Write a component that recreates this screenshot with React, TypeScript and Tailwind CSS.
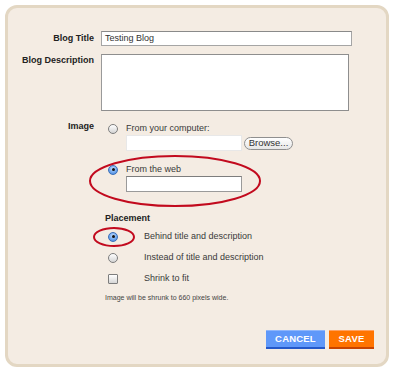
import React from "react";

const font = { fontFamily: '"Liberation Sans", Arial, sans-serif' };

function Radio({ checked }: { checked?: boolean }) {
  return checked ? (
    <div className="w-[10px] h-[10px] rounded-full border border-[#3a6fb8] bg-[radial-gradient(circle_at_50%_35%,#cfe4ff_0%,#7fb2f2_45%,#3b7fdc_100%)] flex items-center justify-center shrink-0">
      <div className="w-[3px] h-[3px] rounded-full bg-[#111]" />
    </div>
  ) : (
    <div className="w-[10px] h-[10px] rounded-full border border-[#7d7d7d] bg-[linear-gradient(#ffffff,#d4d4d4)] shrink-0" />
  );
}

export default function App() {
  return (
    <div className="relative w-[400px] h-[383px] bg-white overflow-hidden" style={font}>
      <div className="ml-[5px] mt-[5px] w-[384px] h-[362px] border-[3px] border-[#e3d7c3] rounded-[12px] bg-[#f4ece3] flex flex-col text-[#333]">
        {/* Blog Title */}
        <div className="flex items-center mt-[23px]">
          <div className="w-[86px] text-right text-[9px] leading-[11px] font-bold text-[#222]">Blog Title</div>
          <div className="ml-[7px] w-[251px] h-[15px] bg-white border border-[#a5a5a5] border-t-[#8a8a8a] flex items-center pl-[3px] text-[9px] text-[#333]">
            Testing Blog
          </div>
        </div>
        {/* Blog Description */}
        <div className="flex items-start mt-[8px]">
          <div className="w-[86px] text-right text-[9px] leading-[11px] font-bold text-[#222] pt-[1px]">Blog Description</div>
          <div className="ml-[7px] w-[248px] h-[57px] bg-white border border-[#8e8e8e] border-l-[#9a9a9a]" />
        </div>
        {/* Image */}
        <div className="flex items-start mt-[10px]">
          <div className="w-[86px] text-right text-[9px] leading-[11px] font-bold text-[#222]">Image</div>
          <div className="ml-[7px] flex flex-col">
            <div className="flex items-center h-[11px] mt-[2px] pl-[7px]">
              <Radio />
              <span className="ml-[8px] text-[9px] leading-[11px] text-[#3a3a3a]">From your computer:</span>
            </div>
            <div className="flex items-center mt-[1px] ml-[25px]">
              <div className="w-[116px] h-[16px] bg-white border border-[#e8e8e8]" />
              <div className="ml-[2px] w-[49px] h-[13px] rounded-full border border-[#8f8f8f] bg-[linear-gradient(#ffffff,#e6e6e6)] flex items-center justify-center text-[9.5px] text-[#333]">
                Browse...
              </div>
            </div>
            <div className="flex items-center h-[11px] mt-[13px] pl-[7px]">
              <Radio checked />
              <span className="ml-[8px] text-[9px] leading-[11px] text-[#3a3a3a]">From the web</span>
            </div>
            <div className="mt-[1px] ml-[25px] w-[116px] h-[16px] bg-white border border-[#9a9a9a] border-t-[#7d7d7d]" />
          </div>
        </div>
        {/* Placement */}
        <div className="mt-[21px] pl-[97px] text-[9px] leading-[11px] font-bold text-[#222]">Placement</div>
        <div className="flex flex-col gap-[10px] mt-[7px] pl-[100px]">
          <div className="flex items-center h-[11px]">
            <Radio checked />
            <span className="ml-[26px] text-[9px] leading-[11px] text-[#3a3a3a]">Behind title and description</span>
          </div>
          <div className="flex items-center h-[11px]">
            <Radio />
            <span className="ml-[26px] text-[9px] leading-[11px] text-[#3a3a3a]">Instead of title and description</span>
          </div>
          <div className="flex items-center h-[11px]">
            <div className="w-[10px] h-[10px] rounded-[1px] border border-[#7d7d7d] bg-[linear-gradient(#ffffff,#d6d6d6)] shrink-0" />
            <span className="ml-[26px] text-[9px] leading-[11px] text-[#3a3a3a]">Shrink to fit</span>
          </div>
        </div>
        <div className="mt-[9px] pl-[97px] text-[7px] leading-[9px] text-[#444]">Image will be shrunk to 660 pixels wide.</div>
        {/* Buttons */}
        <div className="mt-auto mb-[15px] flex justify-end gap-[4px] pr-[12px]">
          <div className="w-[59px] h-[19px] bg-[#5f98f9] border-b-2 border-[#2458c9] border-t border-t-[#8fb6fb] flex items-center justify-center text-white font-bold text-[9.5px] tracking-[0.2px]">
            CANCEL
          </div>
          <div className="w-[45px] h-[19px] bg-[#ff7400] border-b-2 border-[#c94400] border-t border-t-[#ffa060] flex items-center justify-center text-white font-bold text-[9.5px] tracking-[0.2px]">
            SAVE
          </div>
        </div>
      </div>
      {/* annotations */}
      <svg className="absolute inset-0 pointer-events-none" width="400" height="383">
        <ellipse cx="175" cy="181" rx="85" ry="25" fill="none" stroke="#c20a1e" strokeWidth="2" />
        <ellipse cx="114" cy="237" rx="20" ry="9" fill="none" stroke="#c20a1e" strokeWidth="2" />
      </svg>
    </div>
  );
}
